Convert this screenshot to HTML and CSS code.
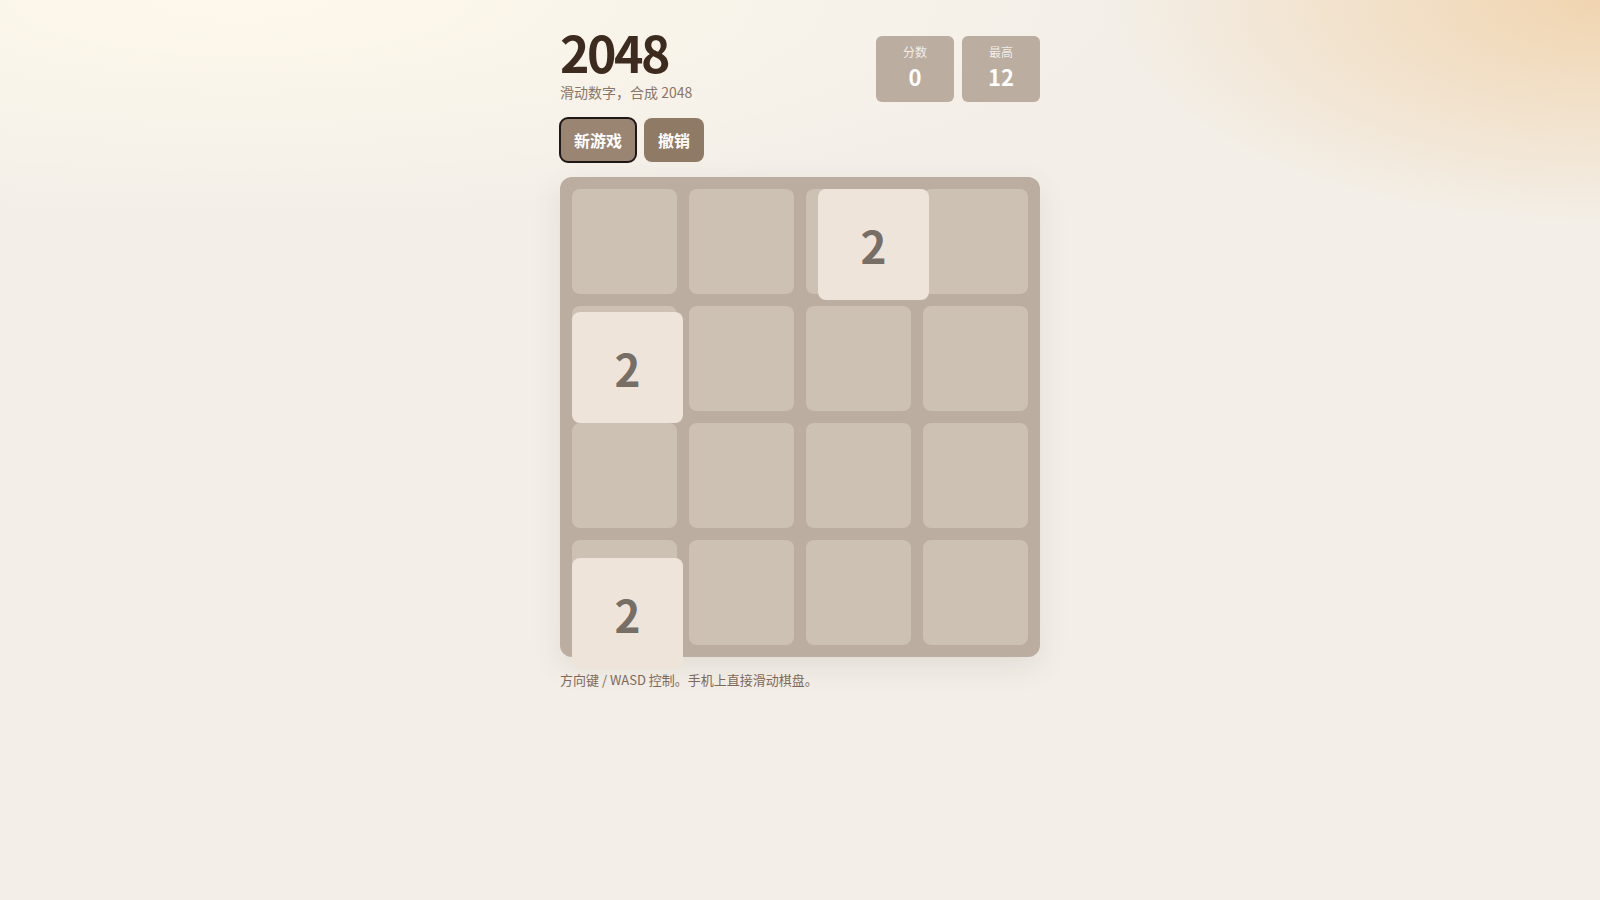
FILE: index.html
```html
<!DOCTYPE html>
<html lang="zh-CN">
<head>
<meta charset="utf-8">
<title>2048</title>
<link rel="stylesheet" href="styles.css">
</head>
<body>
<main class="app">
  <header class="header">
    <div class="brand">
      <h1 class="title">2048</h1>
      <p class="subtitle">滑动数字，合成 2048</p>
    </div>
    <div class="scores">
      <div class="score-box">
        <div class="score-label">分数</div>
        <div class="score-value">0</div>
      </div>
      <div class="score-box">
        <div class="score-label">最高</div>
        <div class="score-value">12</div>
      </div>
    </div>
  </header>
  <div class="actions">
    <button class="btn btn-focus" type="button">新游戏</button>
    <button class="btn" type="button">撤销</button>
  </div>
  <div class="board">
    <div class="grid">
      <div class="cell"></div><div class="cell"></div><div class="cell"></div><div class="cell"></div>
      <div class="cell"></div><div class="cell"></div><div class="cell"></div><div class="cell"></div>
      <div class="cell"></div><div class="cell"></div><div class="cell"></div><div class="cell"></div>
      <div class="cell"></div><div class="cell"></div><div class="cell"></div><div class="cell"></div>
    </div>
    <div class="tile tile-a">2</div>
    <div class="tile tile-b">2</div>
    <div class="tile tile-c">2</div>
  </div>
  <p class="hint">方向键 / WASD 控制。手机上直接滑动棋盘。</p>
</main>
</body>
</html>
```
FILE: styles.css
```css
html, body {
  margin: 0;
  padding: 0;
  height: 100%;
}
body {
  font-family: "Noto Sans CJK SC", "Noto Sans", sans-serif;
  background:
    radial-gradient(ellipse 500px 230px at 100% 0%, rgba(240, 205, 160, 0.78), rgba(240, 205, 160, 0) 100%),
    radial-gradient(ellipse 900px 220px at 15% 0%, rgba(255, 249, 236, 0.95), rgba(255, 249, 236, 0) 100%),
    #f3efe8;
  color: #3d2b1f;
}
.app {
  width: 480px;
  margin: 0 auto;
  padding-top: 26px;
  display: flex;
  flex-direction: column;
  gap: 15px;
}
.header {
  display: flex;
  justify-content: space-between;
  align-items: flex-start;
}
.title {
  margin: 0;
  font-size: 50px;
  line-height: 50px;
  height: 50px;
  font-weight: 700;
  color: #3d2b1f;
  letter-spacing: -2.5px;
}
.subtitle {
  margin: 6px 0 0;
  font-size: 14px;
  line-height: 20px;
  color: #8a7566;
}
.scores {
  display: flex;
  gap: 8px;
  margin-top: 10px;
}
.score-box {
  width: 78px;
  box-sizing: border-box;
  padding: 8px 0 13px;
  background: #bbada0;
  border-radius: 6px;
  text-align: center;
  color: #fff;
}
.score-label {
  font-size: 12px;
  line-height: 16px;
  color: rgba(255, 255, 255, 0.8);
}
.score-value {
  margin-top: 3px;
  font-size: 22px;
  line-height: 26px;
  font-weight: 700;
}
.actions {
  display: flex;
  gap: 8px;
  margin-top: 1px;
}
.btn {
  font-family: "Noto Sans CJK SC", "Noto Sans", sans-serif;
  font-size: 16px;
  line-height: 24px;
  font-weight: 700;
  color: #fff;
  background: #8f7a66;
  border: 0;
  border-radius: 8px;
  padding: 10px 14px;
  cursor: pointer;
}
.btn-focus {
  background: #9a8472;
  outline: 2px solid #1e1916;
  outline-offset: -1px;
}
.board {
  position: relative;
  width: 480px;
  height: 480px;
  box-sizing: border-box;
  padding: 12px;
  background: #bbada0;
  border-radius: 12px;
  box-shadow: 0 10px 30px rgba(80, 60, 40, 0.10);
}
.grid {
  display: grid;
  grid-template-columns: repeat(4, 105px);
  grid-template-rows: repeat(4, 105px);
  gap: 12px;
}
.cell {
  background: #cdc1b4;
  border-radius: 8px;
}
.tile {
  position: absolute;
  width: 111px;
  height: 111px;
  border-radius: 8px;
  background: #eee4da;
  color: #776e65;
  font-size: 44px;
  font-weight: 700;
  display: flex;
  align-items: center;
  justify-content: center;
  line-height: 1;
}
.tile-a { left: 258px; top: 12px; }
.tile-b { left: 12px; top: 135px; }
.tile-c { left: 12px; top: 381px; }
.hint {
  margin: -2px 0 0;
  font-size: 13px;
  line-height: 20px;
  color: #7f6b5c;
}
```
